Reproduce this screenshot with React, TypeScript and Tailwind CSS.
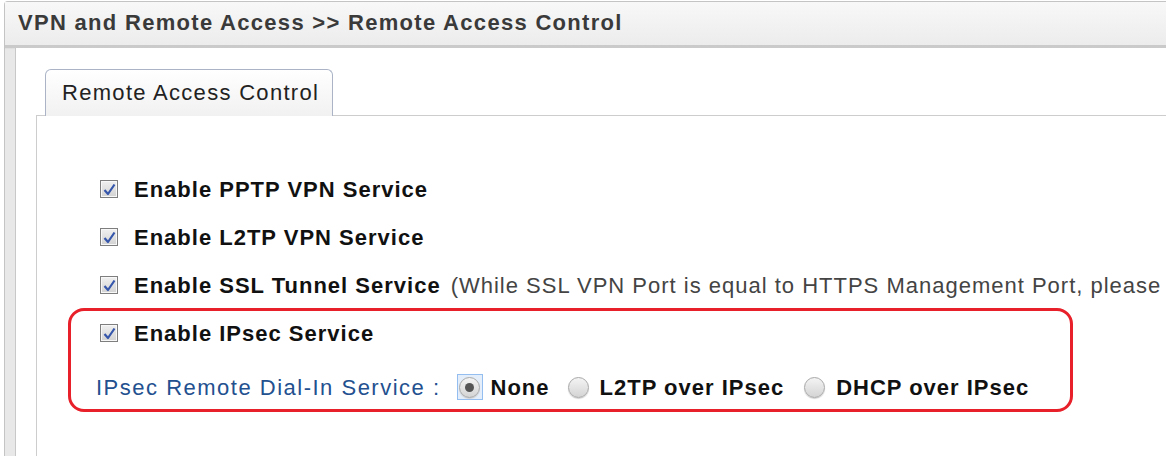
import type { ReactNode } from "react";

function CheckBox() {
  return (
    <span className="flex h-[18px] w-[18px] shrink-0 items-center justify-center border border-[#7e7e7e] bg-gradient-to-b from-[#f0f0f0] to-[#d2d2d2] shadow-[inset_0_0_0_1px_#f8f8f8]">
      <svg width="13" height="13" viewBox="0 0 13 13">
        <path d="M1.5 7 L5 11 L11.5 1.5" fill="none" stroke="#3556aa" strokeWidth="2.2" strokeLinejoin="round" />
      </svg>
    </span>
  );
}

function Radio({ checked }: { checked?: boolean }) {
  const circle = (
    <span className="flex h-[21px] w-[21px] items-center justify-center rounded-full border border-[#a8a8a8] bg-gradient-to-b from-[#f4f4f4] to-[#d4d4d4] shadow-[0_1px_1px_#d0d0d0]">
      {checked && <span className="h-[9px] w-[9px] rounded-full bg-[#555]" />}
    </span>
  );
  if (!checked) return circle;
  return (
    <span className="flex h-[26px] w-[26px] items-center justify-center border border-[#94bdf0] bg-[#e4eefa]">
      {circle}
    </span>
  );
}

function Option({ children }: { children: ReactNode }) {
  return (
    <div className="flex h-[48px] items-center">
      <CheckBox />
      <span className="ml-[16px] font-bold text-[#111]">{children}</span>
    </div>
  );
}

export default function App() {
  return (
    <div className="h-[456px] w-[1166px] overflow-hidden bg-white pt-[1px] pl-[4px] font-['Liberation_Sans',Arial,sans-serif] text-[22px] tracking-[1px]">
      <div className="flex h-[455px] flex-col rounded-tl-[4px] border-l border-t border-[#c4c4c4] bg-[#e8e8e8]">
        <div className="flex h-[46px] shrink-0 items-center border-b-[3px] border-[#cacaca] bg-gradient-to-b from-[#f8f8f8] to-[#ececec] pb-[2px] pl-[13px] font-bold tracking-[1.3px] text-[#3a3a3a] shadow-[0_1px_0_#e0e0e0]">
          VPN and Remote Access &gt;&gt; Remote Access Control
        </div>
        <div className="flex flex-1 flex-col pl-[10px]">
          <div className="flex flex-1 flex-col border-l border-[#c8c8c8] bg-white pl-[20px] pt-[21px]">
            <div className="relative z-10 -mb-px flex pl-[9px]">
              <div className="flex h-[47px] w-[288px] items-center rounded-t-[6px] border border-b-0 border-[#aab4c6] bg-gradient-to-b from-white to-[#f1f1f1] pb-[1px] pl-[16px] tracking-[1.3px] text-[#222]">
                Remote Access Control
              </div>
            </div>
            <div className="flex flex-1 flex-col border-l border-t border-[#cdcdcd] pl-[63px] pt-[49px]">
              <Option>Enable PPTP VPN Service</Option>
              <Option>Enable L2TP VPN Service</Option>
              <div className="flex h-[48px] items-center whitespace-nowrap">
                <CheckBox />
                <span className="ml-[16px] font-bold text-[#111]">Enable SSL Tunnel Service</span>
                <span className="ml-[10px] text-[#444]">
                  (While SSL VPN Port is equal to HTTPS Management Port, please
                </span>
              </div>
              <div className="relative">
                <div className="pointer-events-none absolute -left-[32px] -top-[1px] h-[104px] w-[1005px] rounded-[16px] border-[3px] border-[#e8202a]" />
                <Option>Enable IPsec Service</Option>
                <div className="-ml-[4px] mt-[6px] flex h-[48px] items-center whitespace-nowrap">
                  <span className="tracking-[1.5px] text-[#23508f]">IPsec Remote Dial-In Service :</span>
                  <span className="ml-[16px] flex items-center">
                    <Radio checked />
                    <span className="ml-[8px] font-bold text-[#111]">None</span>
                  </span>
                  <span className="ml-[18px] flex items-center">
                    <Radio />
                    <span className="ml-[11px] font-bold text-[#111]">L2TP over IPsec</span>
                  </span>
                  <span className="ml-[20px] flex items-center">
                    <Radio />
                    <span className="ml-[11px] font-bold text-[#111]">DHCP over IPsec</span>
                  </span>
                </div>
              </div>
            </div>
          </div>
        </div>
      </div>
    </div>
  );
}
